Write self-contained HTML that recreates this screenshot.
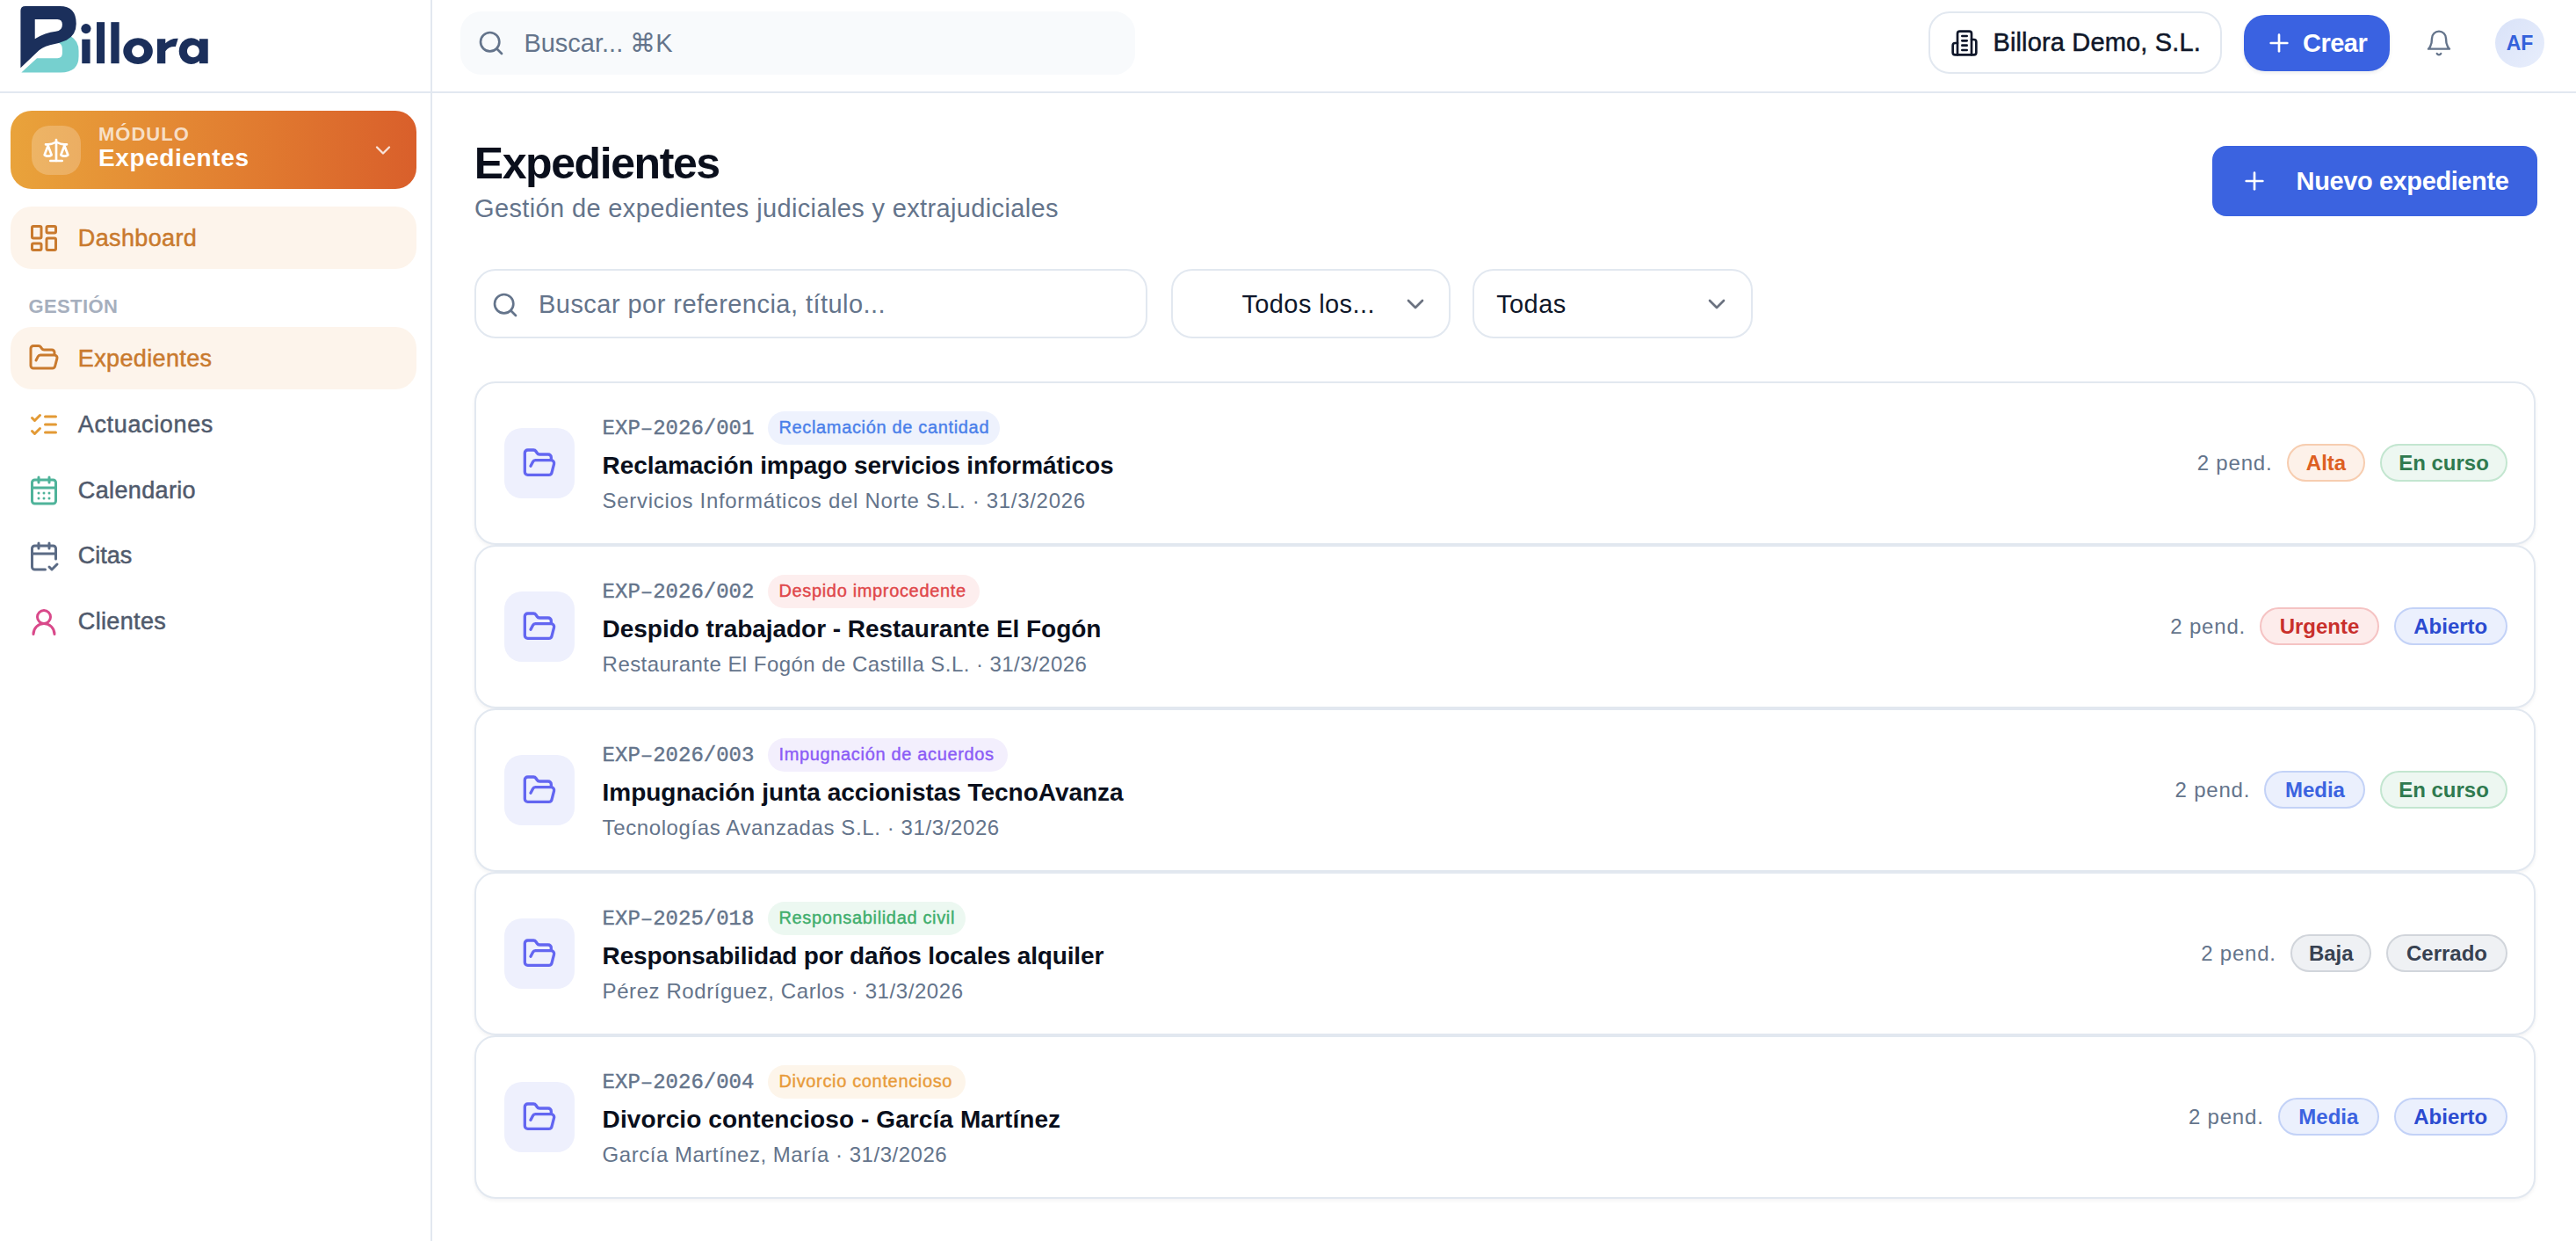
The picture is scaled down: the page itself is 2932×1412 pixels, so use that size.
<!DOCTYPE html>
<html lang="es">
<head>
<meta charset="utf-8">
<title>Expedientes - Billora</title>
<style>
html,body{margin:0;padding:0;background:#fff;}
body{width:1466px;height:706px;overflow:hidden;zoom:2;position:relative;font-family:"Liberation Sans",sans-serif;color:#0f172a;}
.abs{position:absolute;}
svg.i{position:absolute;fill:none;stroke:currentColor;stroke-width:2;stroke-linecap:round;stroke-linejoin:round;}
.hline{position:absolute;left:0;top:52px;width:1466px;height:1px;background:#e2e8f0;}
.vline{position:absolute;left:245px;top:0;width:1px;height:706px;background:#e2e8f0;}
.t{position:absolute;white-space:nowrap;line-height:1;}
.med{-webkit-text-stroke:.25px currentColor;}
.card{position:absolute;left:270px;width:1171px;height:91px;border:1px solid #e2e8f0;border-radius:12px;background:#fff;box-shadow:0 1px 2px rgba(15,23,42,.05);}
.ib{position:absolute;left:16px;top:25.4px;width:40px;height:40px;border-radius:10px;background:#eef0fd;}
.row1{position:absolute;left:71.8px;top:15.8px;height:19px;display:flex;align-items:center;white-space:nowrap;}
.ref{-webkit-text-stroke:.2px currentColor;font-family:"Liberation Mono",monospace;font-size:12px;line-height:19px;color:#64748b;position:relative;top:.8px;}
.tb{-webkit-text-stroke:.2px currentColor;margin-left:8px;height:19px;line-height:18.4px;font-size:10px;letter-spacing:.33px;padding:0 0 0 6px;border-radius:999px;box-sizing:border-box;text-align:left;}
.ct{position:absolute;left:71.8px;top:40.15px;font-size:14px;line-height:1;font-weight:bold;color:#0a0f1c;white-space:nowrap;}
.cs{position:absolute;left:71.8px;top:60.75px;font-size:12px;letter-spacing:.34px;line-height:1;color:#64748b;white-space:nowrap;}
.rt{position:absolute;right:15.1px;top:34.4px;display:flex;align-items:center;white-space:nowrap;}
.pend{font-size:12px;letter-spacing:.4px;color:#64748b;margin-right:8.1px;line-height:21.5px;}
.sb{display:inline-block;box-sizing:border-box;height:21.5px;line-height:19.5px;border:1px solid;border-radius:999px;font-size:12px;font-weight:bold;text-align:center;}
.sb+.sb{margin-left:8.4px;}
</style>
</head>
<body>
<div class="hline"></div>
<div class="vline"></div>

<!-- LOGO -->
<svg class="abs" style="left:7.5px;top:0;width:120px;height:47.5px" viewBox="0 0 2576 1020">
  <path fill="#76d0cf" d="M100 885 L290 710 L540 710 Q600 710 600 650 L600 600 Q600 530 540 520 L700 440 Q800 500 800 620 L800 690 Q800 885 580 885 Z"/>
  <path fill="#1b2f5b" fill-rule="evenodd" d="M90 130 Q90 75 150 75 L570 75 Q770 75 770 290 Q770 430 650 490 Q560 530 450 550 Q340 580 290 640 L90 830 Z M265 235 L540 235 Q600 235 600 300 Q600 375 520 385 Q390 400 265 475 Z"/>
  <g fill="#1b2f5b">
    <circle cx="890" cy="350" r="60"/>
    <rect x="840" y="480" width="100" height="295"/>
    <rect x="1020" y="270" width="97" height="505"/>
    <rect x="1195" y="270" width="100" height="505"/>
    <path fill-rule="evenodd" d="M1525 465 A180 160 0 1 1 1524.9 465 Z M1525 550 A75 75 0 1 0 1525.1 550 Z"/>
    <path d="M1760 475 L1860 475 L1860 530 Q1920 465 2015 470 L1985 570 Q1900 565 1860 625 L1860 775 L1760 775 Z"/>
    <path fill-rule="evenodd" d="M2175 465 A150 160 0 1 0 2176 465 Z M2200 550 A75 75 0 1 1 2199 550 Z"/>
    <rect x="2275" y="475" width="105" height="300"/>
  </g>
</svg>

<!-- HEADER -->
<div class="abs" style="left:262px;top:6.7px;width:384px;height:36px;background:#f8fafc;border-radius:12px;"></div>
<svg class="i" style="left:271.5px;top:16.5px;width:16px;height:16px;color:#64748b" viewBox="0 0 24 24"><circle cx="11" cy="11" r="8"/><path d="m21 21-4.3-4.3"/></svg>
<div class="t" style="left:298.2px;top:17.35px;font-size:14.5px;color:#64748b">Buscar... ⌘K</div>

<div class="abs" style="left:1097.25px;top:6.67px;width:165.25px;height:33.3px;border:1px solid #e2e8f0;border-radius:12px;"></div>
<svg class="i" style="left:1110px;top:16.4px;width:16px;height:16px;color:#0f172a" viewBox="0 0 24 24"><path d="M6 22V4a2 2 0 0 1 2-2h8a2 2 0 0 1 2 2v18Z"/><path d="M6 12H4a2 2 0 0 0-2 2v6a2 2 0 0 0 2 2h2"/><path d="M18 9h2a2 2 0 0 1 2 2v9a2 2 0 0 1-2 2h-2"/><path d="M10 6h4"/><path d="M10 10h4"/><path d="M10 14h4"/><path d="M10 18h4"/></svg>
<div class="t med" style="left:1134.2px;top:17px;font-size:14.5px;letter-spacing:.08px;color:#0f172a">Billora Demo, S.L.</div>

<div class="abs" style="left:1277px;top:8.5px;width:83px;height:32.1px;background:#3a62e1;border-radius:12px;box-shadow:0 1px 2px rgba(15,23,42,.08);"></div>
<svg class="i" style="left:1289px;top:16.5px;width:16px;height:16px;color:#fff" viewBox="0 0 24 24"><path d="M5 12h14"/><path d="M12 5v14"/></svg>
<div class="t" style="left:1310.5px;top:17.35px;font-size:14.5px;font-weight:bold;letter-spacing:-.25px;color:#fff">Crear</div>

<svg class="i" style="left:1380.1px;top:16.65px;width:16px;height:16px;color:#64748b;stroke-width:1.8" viewBox="0 0 24 24"><path d="M6 8a6 6 0 0 1 12 0c0 7 3 9 3 9H3s3-2 3-9"/><path d="M10.3 21a1.94 1.94 0 0 0 3.4 0"/></svg>
<div class="abs" style="left:1420px;top:10.3px;width:28px;height:28px;border-radius:50%;background:linear-gradient(135deg,#d9e2f8,#e8eefc);"></div>
<div class="t" style="left:1420px;top:18.75px;width:28px;text-align:center;font-size:11.5px;font-weight:bold;color:#3461db">AF</div>

<!-- SIDEBAR -->
<div class="abs" style="left:6px;top:63px;width:231px;height:44.5px;border-radius:12px;background:linear-gradient(90deg,#e9a33b,#e0782f 65%,#d95f2b);"></div>
<div class="abs" style="left:18px;top:71.5px;width:28px;height:28px;border-radius:10px;background:rgba(255,255,255,.22);"></div>
<svg class="i" style="left:24px;top:77.5px;width:16px;height:16px;color:#fff" viewBox="0 0 24 24"><path d="m16 16 3-8 3 8c-.87.65-1.92 1-3 1s-2.13-.35-3-1Z"/><path d="m2 16 3-8 3 8c-.87.65-1.92 1-3 1s-2.13-.35-3-1Z"/><path d="M7 21h10"/><path d="M12 3v18"/><path d="M3 7h2c2 0 5-1 7-2 2 1 5 2 7 2h2"/></svg>
<div class="t" style="left:56px;top:71.2px;font-size:11px;font-weight:bold;letter-spacing:.5px;color:rgba(255,255,255,.72)">MÓDULO</div>
<div class="t" style="left:56px;top:82.8px;font-size:14px;letter-spacing:.3px;font-weight:bold;color:#fff">Expedientes</div>
<svg class="i" style="left:211px;top:78.47px;width:14px;height:14px;color:rgba(255,255,255,.82)" viewBox="0 0 24 24"><path d="m6 9 6 6 6-6"/></svg>

<div class="abs" style="left:6px;top:117.45px;width:231px;height:35.5px;border-radius:12px;background:#fdf4eb;"></div>
<svg class="i" style="left:16px;top:126.5px;width:18px;height:18px;color:#c97a2e" viewBox="0 0 24 24"><rect width="7" height="9" x="3" y="3" rx="1"/><rect width="7" height="5" x="14" y="3" rx="1"/><rect width="7" height="9" x="14" y="12" rx="1"/><rect width="7" height="5" x="3" y="16" rx="1"/></svg>
<div class="t med" style="left:44.4px;top:128.8px;font-size:13.5px;letter-spacing:.18px;color:#c97a2e">Dashboard</div>

<div class="t" style="left:16.2px;top:169px;font-size:11px;font-weight:bold;letter-spacing:.2px;color:#a6afbe">GESTIÓN</div>

<div class="abs" style="left:6px;top:185.9px;width:231px;height:35.5px;border-radius:12px;background:#fdf4eb;"></div>
<svg class="i" style="left:16px;top:194.5px;width:18px;height:18px;color:#c97a2e" viewBox="0 0 24 24"><path d="m6 14 1.5-2.9A2 2 0 0 1 9.24 10H20a2 2 0 0 1 1.94 2.5l-1.54 6a2 2 0 0 1-1.95 1.5H4a2 2 0 0 1-2-2V5a2 2 0 0 1 2-2h3.9a2 2 0 0 1 1.69.9l.81 1.2a2 2 0 0 0 1.67.9H18a2 2 0 0 1 2 2v2"/></svg>
<div class="t med" style="left:44.4px;top:197.4px;font-size:13.5px;letter-spacing:.18px;color:#c97a2e">Expedientes</div>

<svg class="i" style="left:16px;top:232.5px;width:18px;height:18px;color:#e39a35" viewBox="0 0 24 24"><path d="m3 17 2 2 4-4"/><path d="m3 7 2 2 4-4"/><path d="M13 6h8"/><path d="M13 12h8"/><path d="M13 18h8"/></svg>
<div class="t med" style="left:44.4px;top:235.2px;font-size:13.5px;letter-spacing:.32px;color:#505a6c">Actuaciones</div>

<svg class="i" style="left:16px;top:269.9px;width:18px;height:18px;color:#4fb39a" viewBox="0 0 24 24"><path d="M8 2v4"/><path d="M16 2v4"/><rect width="18" height="18" x="3" y="4" rx="2"/><path d="M3 10h18"/><path d="M8 14h.01"/><path d="M12 14h.01"/><path d="M16 14h.01"/><path d="M8 18h.01"/><path d="M12 18h.01"/><path d="M16 18h.01"/></svg>
<div class="t med" style="left:44.4px;top:272.4px;font-size:13.5px;letter-spacing:.18px;color:#505a6c">Calendario</div>

<svg class="i" style="left:16px;top:307.4px;width:18px;height:18px;color:#5b6b85" viewBox="0 0 24 24"><path d="M8 2v4"/><path d="M16 2v4"/><path d="M21 14V6a2 2 0 0 0-2-2H5a2 2 0 0 0-2 2v14a2 2 0 0 0 2 2h8"/><path d="M3 10h18"/><path d="m16 20 2 2 4-4"/></svg>
<div class="t med" style="left:44.4px;top:309.7px;font-size:13.5px;letter-spacing:0px;color:#505a6c">Citas</div>

<svg class="i" style="left:16px;top:344.9px;width:18px;height:18px;color:#d9498a" viewBox="0 0 24 24"><circle cx="12" cy="8" r="5"/><path d="M20 21a8 8 0 0 0-16 0"/></svg>
<div class="t med" style="left:44.4px;top:347.1px;font-size:13.5px;letter-spacing:.18px;color:#505a6c">Clientes</div>

<!-- MAIN HEADER -->
<div class="t" style="left:269.9px;top:80.3px;font-size:25px;font-weight:bold;letter-spacing:-.71px;color:#0a0f1c">Expedientes</div>
<div class="t" style="left:270.05px;top:111.7px;font-size:14.5px;letter-spacing:.18px;color:#64748b">Gestión de expedientes judiciales y extrajudiciales</div>

<div class="abs" style="left:1259px;top:83px;width:185px;height:40px;border-radius:8px;background:#3b63e0;"></div>
<svg class="i" style="left:1275px;top:95px;width:16px;height:16px;color:#fff" viewBox="0 0 24 24"><path d="M5 12h14"/><path d="M12 5v14"/></svg>
<div class="t" style="left:1306.8px;top:96.15px;font-size:14.5px;font-weight:bold;letter-spacing:-.2px;color:#fff">Nuevo expediente</div>

<!-- FILTERS -->
<div class="abs" style="left:270.2px;top:153.2px;width:381px;height:37.4px;border:1px solid #e2e8f0;border-radius:12px;"></div>
<svg class="i" style="left:279.7px;top:165.4px;width:16px;height:16px;color:#64748b" viewBox="0 0 24 24"><circle cx="11" cy="11" r="8"/><path d="m21 21-4.3-4.3"/></svg>
<div class="t" style="left:306.5px;top:165.9px;font-size:14.5px;letter-spacing:.23px;color:#64748b">Buscar por referencia, título...</div>

<div class="abs" style="left:666.3px;top:153.2px;width:157.2px;height:37.4px;border:1px solid #e2e8f0;border-radius:12px;"></div>
<div class="t" style="left:706.7px;top:165.9px;font-size:14.5px;letter-spacing:.2px;color:#0f172a">Todos los...</div>
<svg class="i" style="left:797.3px;top:165px;width:16px;height:16px;color:#6b7280" viewBox="0 0 24 24"><path d="m6 9 6 6 6-6"/></svg>

<div class="abs" style="left:838.2px;top:153.2px;width:157.3px;height:37.4px;border:1px solid #e2e8f0;border-radius:12px;"></div>
<div class="t" style="left:851.6px;top:165.9px;font-size:14.5px;letter-spacing:.2px;color:#0f172a">Todas</div>
<svg class="i" style="left:969px;top:165px;width:16px;height:16px;color:#6b7280" viewBox="0 0 24 24"><path d="m6 9 6 6 6-6"/></svg>

<!-- CARDS -->
<div class="card" style="top:217px">
  <div class="ib"><svg class="i" style="left:9.8px;top:10.1px;width:20px;height:20px;color:#6366f1" viewBox="0 0 24 24"><path d="m6 14 1.5-2.9A2 2 0 0 1 9.24 10H20a2 2 0 0 1 1.94 2.5l-1.54 6a2 2 0 0 1-1.95 1.5H4a2 2 0 0 1-2-2V5a2 2 0 0 1 2-2h3.9a2 2 0 0 1 1.69.9l.81 1.2a2 2 0 0 0 1.67.9H18a2 2 0 0 1 2 2v2"/></svg></div>
  <div class="row1"><span class="ref">EXP–2026/001</span><span class="tb" style="width:131.9px;background:#eef2fd;color:#4a80ea">Reclamación de cantidad</span></div>
  <div class="ct" style="letter-spacing:-0.04px">Reclamación impago servicios informáticos</div>
  <div class="cs" style="letter-spacing:0.346px">Servicios Informáticos del Norte S.L. · 31/3/2026</div>
  <div class="rt"><span class="pend">2 pend.</span><span class="sb" style="width:44.9px;background:#fdf1e9;border-color:#f7cdb0;color:#dd5f22">Alta</span><span class="sb" style="width:72.3px;background:#edf7f1;border-color:#c3e6d0;color:#2f7a4f">En curso</span></div>
</div>
<div class="card" style="top:310px">
  <div class="ib"><svg class="i" style="left:9.8px;top:10.1px;width:20px;height:20px;color:#6366f1" viewBox="0 0 24 24"><path d="m6 14 1.5-2.9A2 2 0 0 1 9.24 10H20a2 2 0 0 1 1.94 2.5l-1.54 6a2 2 0 0 1-1.95 1.5H4a2 2 0 0 1-2-2V5a2 2 0 0 1 2-2h3.9a2 2 0 0 1 1.69.9l.81 1.2a2 2 0 0 0 1.67.9H18a2 2 0 0 1 2 2v2"/></svg></div>
  <div class="row1"><span class="ref">EXP–2026/002</span><span class="tb" style="width:120.2px;background:#fdeeee;color:#e0474a">Despido improcedente</span></div>
  <div class="ct" style="letter-spacing:-0.02px">Despido trabajador - Restaurante El Fogón</div>
  <div class="cs" style="letter-spacing:0.225px">Restaurante El Fogón de Castilla S.L. · 31/3/2026</div>
  <div class="rt"><span class="pend">2 pend.</span><span class="sb" style="width:67.8px;background:#fdeceb;border-color:#f5c3c3;color:#c9302c">Urgente</span><span class="sb" style="width:64.6px;background:#ebf0fd;border-color:#c3d2f7;color:#2b4bd0">Abierto</span></div>
</div>
<div class="card" style="top:403px">
  <div class="ib"><svg class="i" style="left:9.8px;top:10.1px;width:20px;height:20px;color:#6366f1" viewBox="0 0 24 24"><path d="m6 14 1.5-2.9A2 2 0 0 1 9.24 10H20a2 2 0 0 1 1.94 2.5l-1.54 6a2 2 0 0 1-1.95 1.5H4a2 2 0 0 1-2-2V5a2 2 0 0 1 2-2h3.9a2 2 0 0 1 1.69.9l.81 1.2a2 2 0 0 0 1.67.9H18a2 2 0 0 1 2 2v2"/></svg></div>
  <div class="row1"><span class="ref">EXP–2026/003</span><span class="tb" style="width:136.2px;background:#f3effd;color:#8b5cf6">Impugnación de acuerdos</span></div>
  <div class="ct" style="letter-spacing:-0.017px">Impugnación junta accionistas TecnoAvanza</div>
  <div class="cs" style="letter-spacing:0.303px">Tecnologías Avanzadas S.L. · 31/3/2026</div>
  <div class="rt"><span class="pend">2 pend.</span><span class="sb" style="width:57.5px;background:#ebf0fd;border-color:#c3d2f7;color:#3b63e0">Media</span><span class="sb" style="width:72.3px;background:#edf7f1;border-color:#c3e6d0;color:#2f7a4f">En curso</span></div>
</div>
<div class="card" style="top:496px">
  <div class="ib"><svg class="i" style="left:9.8px;top:10.1px;width:20px;height:20px;color:#6366f1" viewBox="0 0 24 24"><path d="m6 14 1.5-2.9A2 2 0 0 1 9.24 10H20a2 2 0 0 1 1.94 2.5l-1.54 6a2 2 0 0 1-1.95 1.5H4a2 2 0 0 1-2-2V5a2 2 0 0 1 2-2h3.9a2 2 0 0 1 1.69.9l.81 1.2a2 2 0 0 0 1.67.9H18a2 2 0 0 1 2 2v2"/></svg></div>
  <div class="row1"><span class="ref">EXP–2025/018</span><span class="tb" style="width:112.3px;background:#ecf8f1;color:#3fae6c">Responsabilidad civil</span></div>
  <div class="ct" style="letter-spacing:-0.08px">Responsabilidad por daños locales alquiler</div>
  <div class="cs" style="letter-spacing:0.288px">Pérez Rodríguez, Carlos · 31/3/2026</div>
  <div class="rt"><span class="pend">2 pend.</span><span class="sb" style="width:46.2px;background:#eff1f4;border-color:#d1d5db;color:#374151">Baja</span><span class="sb" style="width:68.8px;background:#eff1f4;border-color:#d1d5db;color:#374151">Cerrado</span></div>
</div>
<div class="card" style="top:589px">
  <div class="ib"><svg class="i" style="left:9.8px;top:10.1px;width:20px;height:20px;color:#6366f1" viewBox="0 0 24 24"><path d="m6 14 1.5-2.9A2 2 0 0 1 9.24 10H20a2 2 0 0 1 1.94 2.5l-1.54 6a2 2 0 0 1-1.95 1.5H4a2 2 0 0 1-2-2V5a2 2 0 0 1 2-2h3.9a2 2 0 0 1 1.69.9l.81 1.2a2 2 0 0 0 1.67.9H18a2 2 0 0 1 2 2v2"/></svg></div>
  <div class="row1"><span class="ref">EXP–2026/004</span><span class="tb" style="width:112.5px;background:#fdf5ea;color:#e89b3a">Divorcio contencioso</span></div>
  <div class="ct" style="letter-spacing:0.046px">Divorcio contencioso - García Martínez</div>
  <div class="cs" style="letter-spacing:0.261px">García Martínez, María · 31/3/2026</div>
  <div class="rt"><span class="pend">2 pend.</span><span class="sb" style="width:57.5px;background:#ebf0fd;border-color:#c3d2f7;color:#3b63e0">Media</span><span class="sb" style="width:64.6px;background:#ebf0fd;border-color:#c3d2f7;color:#2b4bd0">Abierto</span></div>
</div>
</body>
</html>
